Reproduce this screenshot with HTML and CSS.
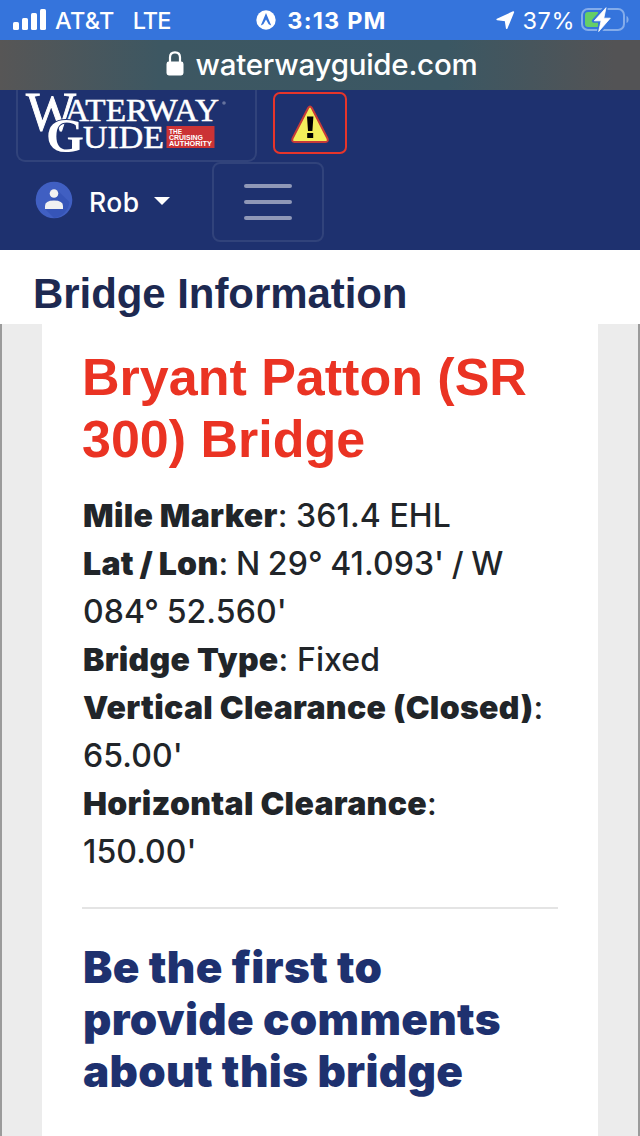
FILE: index.html
```html
<!DOCTYPE html>
<html lang="en">
<head>
    <meta charset="UTF-8">
    <meta name="viewport" content="width=device-width, initial-scale=1.0">
    <title>Bridge Information</title>
    <link rel="stylesheet" href="styles.css">
</head>
<body>

    <div class="status-bar">
        <div class="status-left">
            <svg class="signal" width="34" height="22" viewBox="0 0 34 22" fill="#fff">
                <rect x="0" y="13" width="6" height="8" rx="1.6"/>
                <rect x="9" y="9" width="6" height="12" rx="1.6"/>
                <rect x="18" y="4" width="6" height="17" rx="1.6"/>
                <rect x="27" y="0" width="6" height="21" rx="1.6"/>
            </svg>
            <span class="carrier">AT&amp;T</span>
            <span class="network">LTE</span>
        </div>
        <div class="status-center">
            <svg width="20" height="20" viewBox="0 0 20 20">
                <circle cx="10" cy="10" r="9.7" fill="#fff"/>
                <path d="M10 3L15.2 15.4L12.7 14.2L10 9.6L7.3 14.2L4.8 15.4Z" fill="#3574dc"/>
            </svg>
            <span class="time">3:13 PM</span>
        </div>
        <div class="status-right">
            <svg width="19" height="19" viewBox="0 0 19 19">
                <path d="M17.4 1L10.7 17.2L9.5 9.4L1.2 8.5Z" fill="#fff" stroke="#fff" stroke-width="1.6" stroke-linejoin="round"/>
            </svg>
            <span class="percent">37%</span>
            <svg class="battery" width="50" height="26" viewBox="0 0 50 26">
                <rect x="2" y="2" width="42" height="21" rx="6" fill="none" stroke="#84acea" stroke-width="2"/>
                <path d="M46.5 9V16C49.3 15 49.3 10 46.5 9Z" fill="#84acea"/>
                <path d="M8 5H18V20H8Q5 20 5 17V8Q5 5 8 5Z" fill="#65ce67"/>
                <path d="M26 0L13.5 14H20.5L18.5 25.5L31.5 11H25Z" fill="#fff" stroke="#3574dc" stroke-width="3.5" stroke-linejoin="round"/>
                <path d="M26 0.7L14.3 13.8H21.1L18.7 24.5L30.3 11.2H23.8Z" fill="#fff" stroke="#fff" stroke-width="0.8" stroke-linejoin="round"/>
            </svg>
        </div>
    </div>

    <div class="url-bar">
        <svg width="18" height="26" viewBox="0 0 18 26">
            <path d="M4 12V6.5Q4 1.4 9 1.4T14 6.5V12" fill="none" stroke="#fff" stroke-width="2.2"/>
            <rect x="0.5" y="10.5" width="17" height="14" rx="2.4" fill="#fff"/>
        </svg>
        <span>waterwayguide.com</span>
    </div>

    <nav class="navbar">
        <div class="nav-row">
            <a class="logo" href="#">
                <svg width="206" height="70" viewBox="0 0 206 70" fill="#fff" font-family="Liberation Serif, serif">
                    <text x="0" y="40" font-size="54" textLength="50" lengthAdjust="spacingAndGlyphs" stroke="#fff" stroke-width="0.9">W</text>
                    <text x="39" y="31" font-size="31" textLength="154" lengthAdjust="spacingAndGlyphs" stroke="#fff" stroke-width="0.5">ATERWAY</text>
                    <text x="20" y="62" font-size="48" font-weight="bold" textLength="38" lengthAdjust="spacingAndGlyphs" stroke="#1e316f" stroke-width="2" paint-order="stroke">G</text>
                    <text x="57" y="57.5" font-size="31" textLength="81" lengthAdjust="spacingAndGlyphs" stroke="#fff" stroke-width="0.5">UIDE</text>
                    <circle cx="198" cy="13" r="1.8" fill="#66739e"/>
                    <rect x="140.5" y="36" width="48" height="22" fill="#cb3335"/>
                    <g font-family="Liberation Sans, sans-serif" font-weight="bold" font-size="6.8">
                        <text x="143" y="43.6" textLength="13" lengthAdjust="spacingAndGlyphs">THE</text>
                        <text x="143" y="49.8" textLength="34" lengthAdjust="spacingAndGlyphs">CRUISING</text>
                        <text x="143" y="56" textLength="43" lengthAdjust="spacingAndGlyphs">AUTHORITY</text>
                    </g>
                </svg>
            </a>
            <a class="alert" href="#">
                <svg width="40" height="42" viewBox="0 0 40 42">
                    <path d="M18.3 5.8Q20 3 21.7 5.8L37.5 36.5Q38.6 40 35.5 40H4.5Q1.4 40 2.5 36.5Z" fill="#f4ef5b" stroke="#c63a38" stroke-width="2" stroke-linejoin="round"/>
                    <path d="M17 14.5H23.4L22.4 29H18Z M17.2 31H23.2V36H17.2Z" fill="#000"/>
                </svg>
            </a>
        </div>
        <div class="nav-row nav-user">
            <svg class="avatar" width="38" height="38" viewBox="0 0 38 38">
                <circle cx="19" cy="19" r="18.3" fill="#405fc2"/>
                <path d="M22 9L34.5 21A18 18 0 0 1 19 37L10 28Z" fill="#3655b8"/>
                <circle cx="19" cy="12.5" r="4.3" fill="#f1f1f1"/>
                <path d="M10 28V25Q10 19.5 19 19.5T28 25V28Z" fill="#f1f1f1"/>
            </svg>
            <span class="user-name">Rob</span>
            <span class="caret"></span>
            <button class="toggler">
                <span></span>
                <span></span>
                <span></span>
            </button>
        </div>
    </nav>

    <h2 class="page-title">Bridge Information</h2>

    <main class="content">
        <div class="card">
            <h1>Bryant Patton (SR 300) Bridge</h1>
            <div class="details">
                <div><b>Mile Marker</b>: 361.4 EHL</div>
                <div class="coords"><b>Lat / Lon</b>: N 29° 41.093' / W<br>084° 52.560'</div>
                <div><b>Bridge Type</b>: Fixed</div>
                <div><b>Vertical Clearance (Closed)</b>:<br>65.00'</div>
                <div><b>Horizontal Clearance</b>:<br>150.00'</div>
            </div>
            <hr>
            <h3>Be the first to<br>provide comments<br>about this bridge</h3>
        </div>
    </main>

</body>
</html>
```

FILE: styles.css
```css
* {
    box-sizing: border-box;
}

body {
    margin: 0;
    height: 1136px;
    overflow: hidden;
    display: flex;
    flex-direction: column;
    background-color: #fff;
    color: #212529;
    font-family: Inter, "Liberation Sans", sans-serif;
}

svg {
    display: block;
    flex: none;
    overflow: visible;
}

/* Phone bars */
.status-bar {
    display: grid;
    grid-template-columns: 1fr auto 1fr;
    align-items: center;
    height: 40px;
    padding: 0 10px 0 13px;
    background-color: #3574dc;
    color: #fff;
    font-size: 23.5px;
    white-space: nowrap;
}

.status-left, .status-center, .status-right {
    display: flex;
    align-items: center;
}

.carrier {
    margin-left: 8px;
    font-weight: 450;
    letter-spacing: 0.3px;
}

.network {
    margin-left: 18px;
    font-weight: 450;
    letter-spacing: -1px;
}

.status-center {
    gap: 11px;
}

.time {
    font-weight: 700;
    letter-spacing: 1.2px;
}

.status-right {
    justify-content: flex-end;
}

.percent {
    margin: 0 5px 0 8px;
    letter-spacing: 0.5px;
}

.url-bar {
    display: flex;
    align-items: center;
    justify-content: center;
    gap: 12px;
    height: 50px;
    padding: 0 0 2px 3px;
    background: linear-gradient(90deg, #575656, #3d5762 25%, #3b5763 70%, #535355 96%);
    color: #fff;
    font-size: 29.5px;
    font-weight: 500;
    letter-spacing: -0.25px;
}

/* Site header */
.navbar {
    height: 160px;
    padding-left: 16px;
    background-color: #1e316f;
}

.nav-row {
    display: flex;
}

.logo {
    width: 241px;
    height: 72px;
    padding-left: 8px;
    border: 2px solid #31437b;
    border-top: 0;
    border-radius: 0 0 9px 9px;
}

.alert {
    display: flex;
    align-items: center;
    justify-content: center;
    width: 74px;
    height: 62px;
    margin: 2px 0 0 16px;
    border: 2px solid #e7352a;
    border-radius: 7px;
}

.nav-user {
    align-items: center;
    height: 80px;
    padding-left: 19px;
    color: #fff;
}

.avatar {
    margin-bottom: 4px;
}

.user-name {
    margin-left: 16px;
    font-size: 26.5px;
    font-weight: 550;
    letter-spacing: 0.5px;
}

.caret {
    margin: -2px 0 0 14px;
    border: 8px solid transparent;
    border-top-color: #fff;
    border-bottom: 0;
}

.toggler {
    display: flex;
    flex-direction: column;
    align-items: center;
    justify-content: center;
    gap: 12px;
    width: 112px;
    height: 80px;
    margin-left: 42px;
    padding: 0;
    background: none;
    border: 2px solid #31437b;
    border-radius: 8px;
}

.toggler span {
    width: 48px;
    height: 4px;
    border-radius: 2px;
    background-color: #8f98b7;
}

/* Page */
.page-title {
    height: 74px;
    margin: 0;
    padding-left: 33px;
    color: #1d2951;
    font: bold 42px/87px "Liberation Sans", Arial, sans-serif;
    letter-spacing: -0.07px;
}

.content {
    flex: 1;
    padding: 0 40px;
    border: solid #9b9b9b;
    border-width: 0 2px;
    background-color: #ececec;
}

.card {
    height: 100%;
    padding: 22px 40px 0;
    background-color: #fff;
}

h1 {
    margin: 0 0 22px;
    color: #ea3323;
    font: bold 52px/62px "Liberation Sans", Arial, sans-serif;
}

.details {
    padding-left: 1px;
    font-size: 32px;
    font-weight: 450;
    line-height: 48px;
    letter-spacing: 0.1px;
}

.details b {
    font-weight: 900;
    letter-spacing: 0.3px;
}

.coords {
    word-spacing: -1px;
}

hr {
    height: 2px;
    margin: 31px 0 32px;
    border: 0;
    background-color: #e4e4e4;
}

h3 {
    margin: 0;
    padding-left: 1px;
    color: #1e316f;
    font-size: 44px;
    font-weight: 900;
    line-height: 52px;
    letter-spacing: 0.3px;
}
```
